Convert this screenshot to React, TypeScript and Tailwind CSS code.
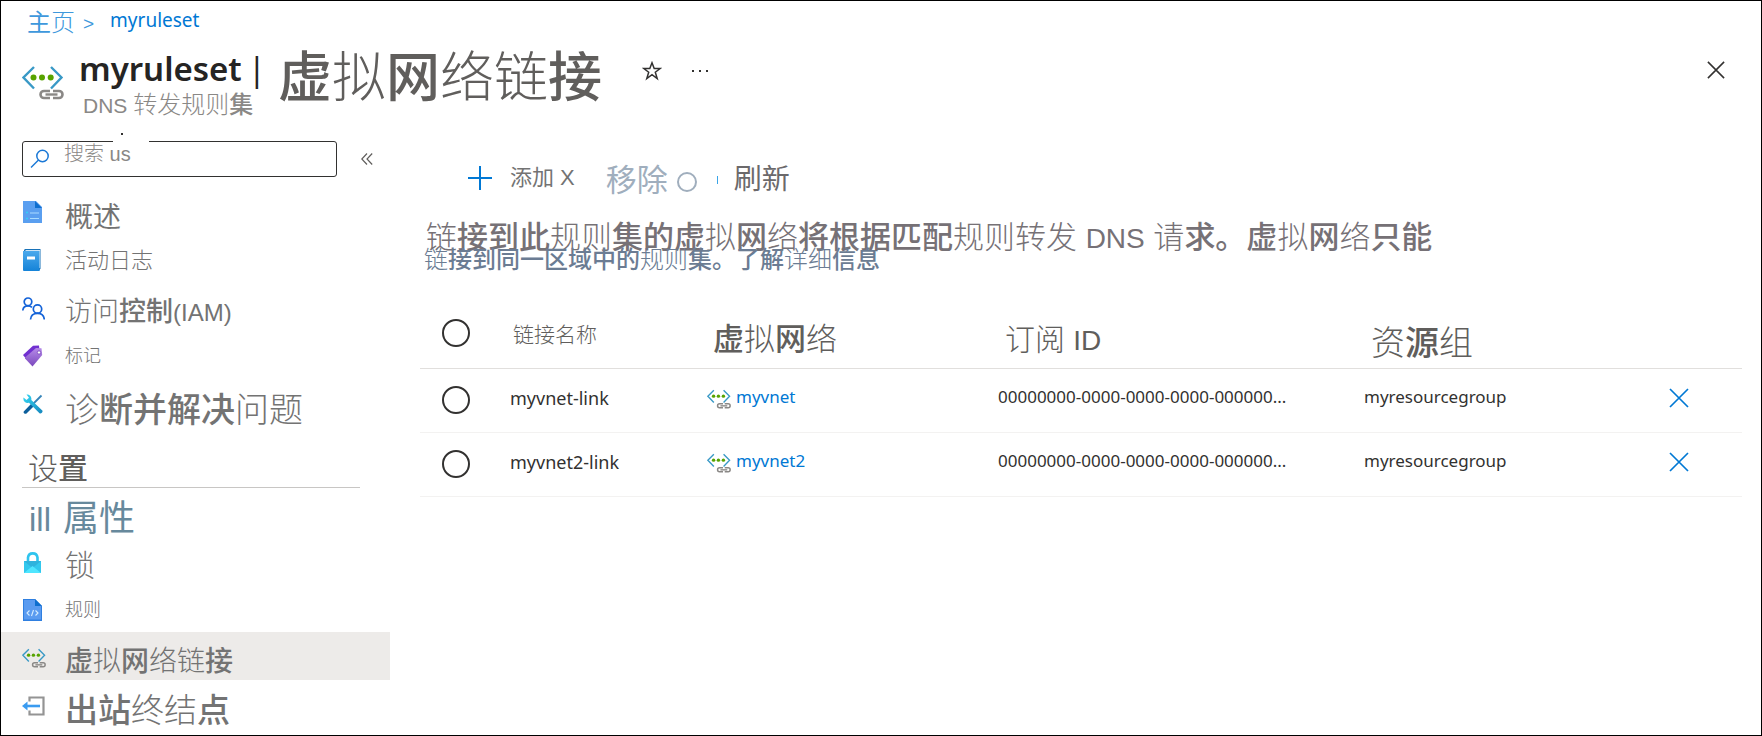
import React from "react";

const latin = "font-['Noto_Sans','Noto_Sans_CJK_SC',sans-serif]";
const han = "font-['Liberation_Sans','Noto_Sans_CJK_SC',sans-serif]";

type IconProps = { className?: string };

function LinkIcon({ className = "w-6 h-5" }: IconProps) {
  return (
    <svg viewBox="0 0 42 35" className={`shrink-0 ${className}`} fill="none" aria-hidden="true">
      <path d="M12 2 1.500 12.500 12 23.500M29 2l10.500 10.500L29 23.500" stroke="#3999c6" strokeWidth="2.400" />
      <circle cx="11.500" cy="12.500" r="3" fill="#57a300" />
      <circle cx="20" cy="12.500" r="3" fill="#57a300" />
      <circle cx="28.700" cy="12.500" r="3" fill="#57a300" />
      <path d="M28 26h-6a3.500 3.500 0 0 0 0 7h6M31 26h6a3.500 3.500 0 0 1 0 7h-6" stroke="#8a8886" strokeWidth="2.600" />
      <path d="M23.500 29.500h12" stroke="#8a8886" strokeWidth="2.400" />
    </svg>
  );
}

function OverviewIcon() {
  return (
    <svg viewBox="0 0 20 22" className="h-[22px] w-5 shrink-0" aria-hidden="true">
      <path d="M0 0h13l6 6v16H0z" fill="#5a9ff0" />
      <path d="M12 0l7 7h-7z" fill="#0f6fcf" />
      <path d="M3 11.500h2M3 17.500h2" stroke="#32d0f5" strokeWidth="1.500" />
      <path d="M7 12h9M7 17.500h9" stroke="#a9dcff" strokeWidth="1.200" />
    </svg>
  );
}

function LogIcon() {
  return (
    <svg viewBox="0 0 20 22" className="h-[22px] w-5 shrink-0" aria-hidden="true">
      <defs>
        <linearGradient id="book" x1="0" y1="0" x2="0" y2="1">
          <stop offset="0" stopColor="#4ba9ec" />
          <stop offset="1" stopColor="#1583d8" />
        </linearGradient>
      </defs>
      <path d="M2 0h15.500v19.500L16 22H1V1z" fill="#1872b8" />
      <path d="M2.500 1H17v18H3z" fill="#cfe5f5" />
      <path d="M0 2h16.500v20H1a1 1 0 0 1-1-1z" fill="url(#book)" />
      <path d="M4 7.500h8v3H4z" fill="#fff" />
    </svg>
  );
}

function PeopleIcon() {
  return (
    <svg viewBox="0 0 23 23" className="-ml-px h-[23px] w-[23px] shrink-0" fill="none" stroke="#1463d8" strokeWidth="1.700" aria-hidden="true">
      <circle cx="6" cy="4.800" r="3.800" />
      <path d="M.8 13.500C1 10.500 3 8.800 6 8.800c1.800 0 3 .5 4 1.600" />
      <circle cx="15.500" cy="12" r="4.200" />
      <path d="M8.500 22.500c.3-4 3-6.200 7-6.200s6.500 2.200 6.800 6.200" />
    </svg>
  );
}

function TagIcon() {
  return (
    <svg viewBox="0 0 20 22" className="h-[22px] w-5 shrink-0" aria-hidden="true">
      <defs>
        <linearGradient id="tag" x1="0" y1="0" x2="0" y2="1">
          <stop offset="0" stopColor="#b68ae8" />
          <stop offset="1" stopColor="#7a48bd" />
        </linearGradient>
      </defs>
      <path d="M0 10 10 .8 16 .5l.5 5L4 15z" fill="#7130d0" />
      <path d="M2 12.500 13 3l5.500.3.7 6.700L9.500 21.500 2 13.500z" fill="url(#tag)" />
      <circle cx="16" cy="7.500" r="1.700" fill="#fff" stroke="#8350c4" />
    </svg>
  );
}

function ToolsIcon() {
  return (
    <svg viewBox="0 0 20 20" className="h-5 w-5 shrink-0" aria-hidden="true">
      <defs>
        <linearGradient id="wrench" x1="0" y1="0" x2="1" y2="1">
          <stop offset="0" stopColor="#34d8f5" />
          <stop offset="1" stopColor="#1686bd" />
        </linearGradient>
      </defs>
      <path d="M2 18 18.500 1.500" stroke="#3483b8" strokeWidth="1.800" />
      <path d="M.8 17.500 8 10l2.500 2.500L3.500 19.500c-1.500 1-3.700-.7-2.700-2z" fill="#0c5f9c" />
      <path d="M3.500.5C6 0 9 2 8.300 6l11 10.500c1 1.300-1.200 4-2.800 2.800L6 8.800C2.500 9.500-.3 7 .5 3.500l3 2.500 2.500-2.300z" fill="url(#wrench)" />
    </svg>
  );
}

function LockIcon() {
  return (
    <svg viewBox="0 0 18 22" className="ml-px h-[22px] w-[18px] shrink-0" aria-hidden="true">
      <path d="M4 11V6.500a4.800 4.800 0 0 1 9.500 0V11" fill="none" stroke="#2fc4ee" strokeWidth="2.600" />
      <path d="M0 10h17v12H0z" fill="#32c8ee" />
      <path d="M0 10l8.500 7L17 10z" fill="#2fb3dd" />
      <path d="M0 22l8.500-7L17 22z" fill="#50e6ff" />
    </svg>
  );
}

function RulesIcon() {
  return (
    <svg viewBox="0 0 20 22" className="h-[22px] w-5 shrink-0" aria-hidden="true">
      <path d="M0 0h12l7 7v15H0z" fill="#2f7fe0" />
      <path d="M1 1h11v6h6v13.500H1z" fill="#5a9bf0" />
      <path d="M12 0l7 7h-7z" fill="#0f6fcf" />
      <path d="M6.500 11.500 4 14l2.500 2.500M12.500 11.500 15 14l-2.500 2.500M10.500 11l-2 6" fill="none" stroke="#d5ecff" strokeWidth="1.100" />
    </svg>
  );
}

function OutboundIcon() {
  return (
    <svg viewBox="0 0 23 20" className="-ml-px h-5 w-[23px] shrink-0" fill="none" aria-hidden="true">
      <path d="M7.500 5.500V1.500h14v17h-14v-4" stroke="#949494" strokeWidth="2.200" />
      <path d="M18 10H3" stroke="#3a9bf0" strokeWidth="2.600" />
      <path d="M0 10l5.500-4.500v9z" fill="#3a9bf0" />
    </svg>
  );
}

function Cross({ className }: IconProps) {
  return (
    <svg viewBox="0 0 20 20" className={className} fill="none" stroke="currentColor" strokeWidth="1.700" aria-hidden="true">
      <path d="M1 1l18 18M19 1 1 19" />
    </svg>
  );
}

type NavItem = { icon: React.ReactNode; label: React.ReactNode; size: string; active?: boolean };

const generalItems: NavItem[] = [
  { icon: <OverviewIcon />, label: <span className="font-normal">概述</span>, size: "text-[28px] pt-3" },
  { icon: <LogIcon />, label: "活动日志", size: "text-[22px] pt-0.5" },
  { icon: <PeopleIcon />, label: <>访问<b>控制</b><span className="text-[24px]">(IAM)</span></>, size: "text-[27px] pt-2" },
  { icon: <TagIcon />, label: "标记", size: "text-[18px]" },
  { icon: <ToolsIcon />, label: <>诊<b>断并解决</b>问题</>, size: "text-[34px] pt-3" },
];

const settingItems: NavItem[] = [
  { icon: <LockIcon />, label: "锁", size: "text-[30px] pt-3" },
  { icon: <RulesIcon />, label: "规则", size: "text-[18px] pt-1" },
  { icon: <LinkIcon className="-ml-px h-5 w-6" />, label: <><b>虚</b>拟<b>网</b>络链<b>接</b></>, size: "text-[28px] pt-3", active: true },
  { icon: <OutboundIcon />, label: <><b>出站</b>终结<b>点</b></>, size: "text-[33px] pt-3" },
];

function NavList({ items, iconClass = "" }: { items: NavItem[]; iconClass?: string }) {
  return (
    <ul>
      {items.map((item, i) => (
        <li key={i}>
          <a
            href="#"
            aria-current={item.active ? "page" : undefined}
            className={`flex h-12 items-center pl-[22px] text-[#737373] ${item.active ? "bg-[#edebe9]" : ""}`}
          >
            <span className={`flex w-[42px] shrink-0 items-center ${iconClass}`}>{item.icon}</span>
            <span className={`leading-none font-light whitespace-nowrap ${item.size}`}>{item.label}</span>
          </a>
        </li>
      ))}
    </ul>
  );
}

const links = [
  { name: "myvnet-link", vnet: "myvnet" },
  { name: "myvnet2-link", vnet: "myvnet2" },
];

const round = "block h-7 w-7 appearance-none rounded-full border-2 border-[#323130] bg-white checked:bg-[#0078d4]";

export default function App() {
  return (
    <div className={`min-h-screen border border-black bg-white text-[#323130] [&_b]:font-medium ${han}`}>
      <header className="pl-[21px]">
        <nav aria-label="breadcrumb" className="flex h-11 items-center text-[#0078d4]">
          <a href="#" className="pl-[5px] text-[24px] leading-none font-light text-[#3e98dc]"><span className="font-normal">主</span>页</a>
          <span className="px-2 text-[19px] leading-none text-[#3e98dc]">&gt;</span>
          <a href="#" className={`pb-1.5 pl-2 text-[19px] leading-none ${latin}`}>myruleset</a>
        </nav>
        <div className="flex h-[84px] items-start">
          <LinkIcon className="mt-5 h-[35px] w-[42px]" />
          <div className="ml-[15px]">
            <h1 className={`flex gap-1.5 text-[33px] leading-[48px] font-semibold whitespace-nowrap text-[#252423] ${latin}`}>
              myruleset <span className="font-normal">|</span>
            </h1>
            <p className="pl-1 text-[21px] leading-6 whitespace-nowrap text-[#8a8886]">
              DNS <span className="text-[24px] font-light">转发规则<b>集</b></span>
            </p>
          </div>
          <h2 className="ml-3 pt-1.5 text-[54px] leading-[54px] font-light whitespace-nowrap text-[#605e5c]">
            <b>虚</b>拟<b>网</b>络链<b>接</b>
          </h2>
          <button aria-label="收藏" className="mt-4 ml-10">
            <svg viewBox="0 0 20 20" className="h-5 w-5" fill="none" stroke="#323130" strokeWidth="1.500" aria-hidden="true">
              <path d="M10 1.800l2.200 5.700h6l-4.900 3.700 1.900 6.300L10 13.700l-5.200 3.800 1.900-6.300L1.800 7.500h6z" />
            </svg>
          </button>
          <button aria-label="更多" className="mt-6 ml-7">
            <svg viewBox="0 0 20 4" className="h-1 w-5" fill="#323130" aria-hidden="true">
              <path d="M2 1h2v2H2zM9 1h2v2H9zM16 1h2v2h-2z" />
            </svg>
          </button>
          <button aria-label="关闭" className="mt-4 mr-9 ml-auto">
            <Cross className="h-[18px] w-[18px]" />
          </button>
        </div>
      </header>

      <div className="flex items-start">
        <aside className="w-[389px] shrink-0">
          <div className="flex h-[59px] items-start pt-3 pl-[21px]">
            <div className="relative w-[315px]">
              <input
                type="text"
                aria-label="搜索"
                placeholder="搜索 us"
                className="h-9 w-full rounded-[3px] border border-[#323130] pb-2.5 pl-[41px] text-[20px] font-light outline-none placeholder:text-[#8a8886]"
              />
              <svg viewBox="0 0 20 20" className="absolute top-2 left-2 h-5 w-5" fill="none" stroke="#1a78d6" strokeWidth="1.500" aria-hidden="true">
                <circle cx="12.500" cy="7" r="5.700" />
                <path d="M8.500 11 1 18.500" />
              </svg>
              <span className="absolute top-0 left-[91px] h-px w-9 bg-white" />
              <span className="absolute -top-2 left-[99px] h-0.5 w-0.5 bg-[#323130]" />
            </div>
            <button aria-label="折叠" className="mt-3 ml-6">
              <svg viewBox="0 0 12 12" className="h-3 w-3" fill="none" stroke="#605e5c" strokeWidth="1.200" aria-hidden="true">
                <path d="M6 .5.8 6 6 11.500M11.200.5 6 6l5.200 5.500" />
              </svg>
            </button>
          </div>
          <NavList items={generalItems} />
          <h3 className="mr-[30px] ml-[21px] flex h-[60px] items-end border-b border-[#c8c6c4] pb-[3px] pl-1.5 text-[30px] leading-none font-light text-[#605e5c]">
            设<b>置</b>
          </h3>
          <a href="#" className="flex h-12 items-center gap-3 pt-3.5 pl-7 leading-none text-[#67899c]">
            <span className="text-[33px]">ill</span>
            <span className="text-[36px]">属性</span>
          </a>
          <NavList items={settingItems} iconClass="pt-1" />
        </aside>

        <main className="min-w-0 flex-1 pr-[19px] pl-[30px]">
          <div className="flex h-[98px] items-center pt-1 pl-12 leading-none text-[#737373]">
            <button className="flex items-center pb-1 text-[22px]">
              <svg viewBox="0 0 24 24" className="mr-[18px] h-6 w-6" fill="none" stroke="#0078d4" strokeWidth="2" aria-hidden="true">
                <path d="M12 0v24M0 12h24" />
              </svg>
              添加 X
            </button>
            <button className="ml-[31px] flex items-center gap-[9px] text-[31px] text-[#a0aebd]">
              移除
              <span className="mt-1 h-5 w-5 rounded-full border-2 border-[#a0aebd]" />
            </button>
            <span className="ml-5 h-2 w-px bg-[#3aa5e8]" />
            <button className="ml-4 text-[28px] text-[#6b696b]">刷新</button>
          </div>
          <p className="pl-1.5 text-[31px] leading-[22px] font-light text-[#767176]">
            链<b>接到此</b>规则<b>集的虚</b>拟<b>网</b>络<b>将根据匹配</b>规则转发 <span className="text-[28px]">DNS</span> 请<b>求。虚</b>拟<b>网</b>络<b>只能</b>
          </p>
          <p className="pl-1 text-[24px] leading-5 font-light text-[#6b7c93]">
            链<b>接到同一区域中的</b>规则<b>集。</b>
            <a href="#"><b>了解</b>详细<b>信息</b></a>
          </p>
          <table className="mt-7 w-full table-fixed border-collapse text-left">
            <colgroup>
              <col className="w-[90px]" />
              <col className="w-[196px]" />
              <col className="w-[292px]" />
              <col className="w-[366px]" />
              <col />
              <col className="w-[73px]" />
            </colgroup>
            <thead>
              <tr className="h-[70px] border-b border-[#e1dfdd] leading-none text-[#605e5c]">
                <th className="pl-[22px]"><input type="checkbox" aria-label="全选" className={round} /></th>
                <th className="pt-1 pl-[3px] text-[21px] font-light">链接名称</th>
                <th className="pt-3.5 pl-[7px] text-[31px] font-light"><b>虚</b>拟<b>网</b>络</th>
                <th className="pt-3.5 pl-[7px] text-[30px] font-light">订阅 <span className="text-[28px]">ID</span></th>
                <th className="pt-5 pl-[7px] text-[34px] font-light">资<b>源</b>组</th>
                <th />
              </tr>
            </thead>
            <tbody className={latin}>
              {links.map((l) => (
                <tr key={l.name} className="h-16 border-b border-[#f3f2f1]">
                  <td className="pl-[22px]"><input type="checkbox" aria-label={l.name} className={round} /></td>
                  <td className="pb-1 text-[18px]">{l.name}</td>
                  <td className="pb-1.5">
                    <a href="#" className="flex items-center gap-1 text-[17px] text-[#0078d4]">
                      <LinkIcon className="mt-1 h-5 w-[26px]" />
                      {l.vnet}
                    </a>
                  </td>
                  <td className="pb-1.5 text-[17px]">00000000-0000-0000-0000-000000...</td>
                  <td className="pb-1.5 text-[17px]">myresourcegroup</td>
                  <td className="pb-1 text-[#0078d4]">
                    <button aria-label="移除" className="block"><Cross className="h-5 w-5" /></button>
                  </td>
                </tr>
              ))}
            </tbody>
          </table>
        </main>
      </div>
    </div>
  );
}
